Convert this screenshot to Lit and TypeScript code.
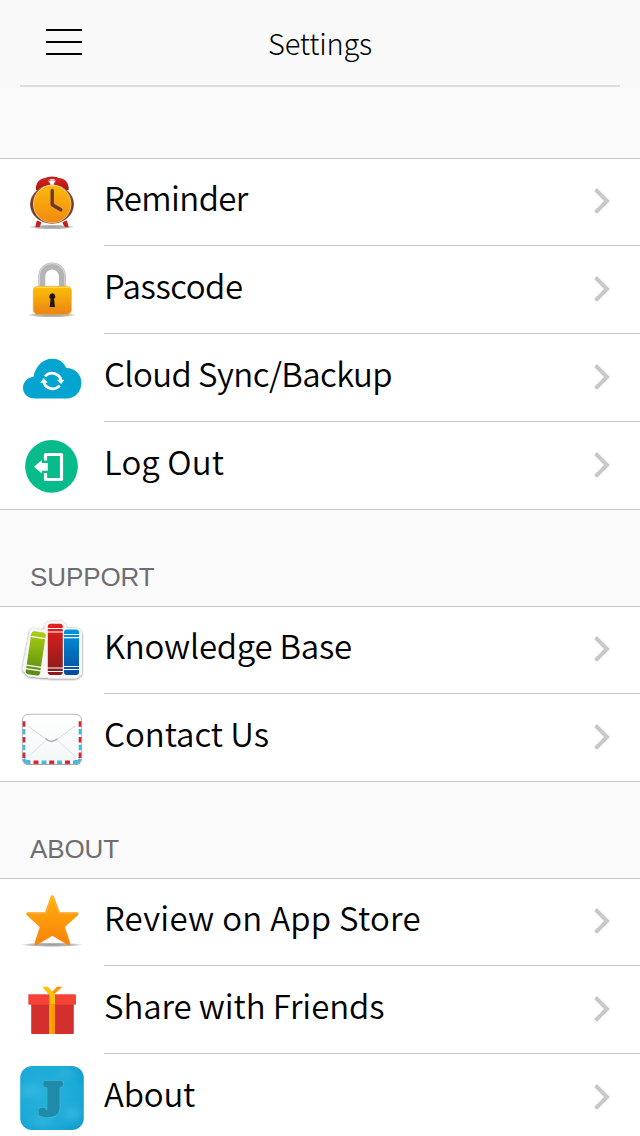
import { LitElement, html, css, svg, type TemplateResult } from "lit";
import { customElement, property } from "lit/decorators.js";
import { styleMap } from "lit/directives/style-map.js";

// Every icon is drawn in a 104x88 cell whose origin is the row's top left corner.
const icons: Record<string, TemplateResult> = {
  clock: svg`
    <defs>
      <linearGradient id="face" x1="0" y1="0" x2="0" y2="1"><stop offset="0" stop-color="#fcb80a"/><stop offset="1" stop-color="#f08a12"/></linearGradient>
      <linearGradient id="bell" x1="0" y1="0" x2="0" y2="1"><stop offset="0" stop-color="#d8241f"/><stop offset="1" stop-color="#a81414"/></linearGradient>
      <linearGradient id="rim" x1="0" y1="0" x2="0" y2="1"><stop offset="0" stop-color="#a0574a"/><stop offset=".5" stop-color="#70382f"/><stop offset="1" stop-color="#7e4437"/></linearGradient>
      <radialGradient id="shade"><stop offset="0" stop-color="#999"/><stop offset=".7" stop-color="#bbb"/><stop offset="1" stop-color="#fff"/></radialGradient>
    </defs>
    <ellipse cx="51.800" cy="69" rx="23.500" ry="2.400" fill="url(#shade)"/>
    <path d="M37.200 63l3.600 1.500-1.500 4.200h-3.400zM66.500 63l-3.600 1.500 2.200 4.200h3z" fill="#c91b1b" stroke="#c91b1b" stroke-width="1"/>
    <path d="M44 22q8-4.500 16 0" fill="none" stroke="#c42020" stroke-width="2.600"/>
    <path d="M36 32c-.8-6.500 3.500-12 10-12 2.600 0 4 1 4.500 3v4c-6 .5-9.500 2.500-12.500 5zM68.600 32c.8-6.500-3.500-12-10-12-2.600 0-4 1-4.500 3v4c6 .5 9 2.500 12 5z" fill="url(#bell)"/>
    <path d="M48 22.700h8l-2.200 3v3.700h-3.600v-3.700z" fill="#fff" stroke="#d55" stroke-width=".5"/>
    <ellipse cx="52" cy="46.200" rx="21.900" ry="19.500" fill="url(#rim)"/>
    <circle cx="52.200" cy="46" r="19.200" fill="#fbdc96"/>
    <circle cx="52.200" cy="46.200" r="18.500" fill="url(#face)"/>
    <path d="M52.200 32.500v14.200l8.600 5.100" fill="none" stroke="#70382c" stroke-width="3.400" stroke-linecap="round" stroke-linejoin="round"/>`,
  lock: svg`
    <defs>
      <linearGradient id="lockbody" x1="0" y1="0" x2="0" y2="1"><stop offset="0" stop-color="#fbbf06"/><stop offset="1" stop-color="#ec8314"/></linearGradient>
      <radialGradient id="lshade"><stop offset="0" stop-color="#999"/><stop offset=".7" stop-color="#bbb"/><stop offset="1" stop-color="#fff"/></radialGradient>
    </defs>
    <ellipse cx="51.800" cy="69" rx="24.500" ry="2.400" fill="url(#lshade)"/>
    <path d="M41.800 44v-13.500a10.300 10.600 0 0 1 20.600 0v13.500" fill="none" stroke="#b4b4b4" stroke-width="7"/>
    <path d="M39.400 42v-12a12.700 12.400 0 0 1 25.400 0v12" fill="none" stroke="#d4d4d4" stroke-width="1.200"/>
    <rect x="33.300" y="40.300" width="38" height="28" rx="4.500" fill="url(#lockbody)" stroke="#f3a52a" stroke-width=".7"/>
    <path d="M36 41.300h33" stroke="#ffdf6a" stroke-width="1"/>
    <path d="M52.200 47.300a3.200 3.200 0 0 1 1.800 5.800l1 8h-5.400l1-8a3.200 3.200 0 0 1 1.600-5.800z" fill="#20170d"/>`,
  cloud: svg`
    <path d="M35 64.600c-7 0-12-4.700-12-10.800 0-5.600 4.300-10.200 10.600-11 1.600-10 8.900-18 18.500-18 6.800 0 11.400 3.200 14.200 9.200 9 0 15.100 6.500 15.100 14.600 0 9.500-6.500 16-14.800 16z" fill="#04a4d0"/>
    <g fill="none" stroke="#fff" stroke-width="2.700">
      <path d="M45 42.500a9 8.500 0 0 1 16 4.500"/>
      <path d="M59.700 51.500a9 8.500 0 0 1-16-4.500"/>
    </g>
    <path d="M57.500 46h6.300l-2.700 3.800zM40.800 48.400h6.400l-3.400-3.900z" fill="#fff" stroke="#fff" stroke-width=".6"/>`,
  logout: svg`
    <circle cx="51.500" cy="44.300" r="26.400" fill="#08bb8b"/>
    <path d="M45.500 38.500v-6h16v25h-16v-6.500" fill="none" stroke="#fff" stroke-width="3.200" stroke-linejoin="round"/>
    <path d="M34 44.800l7.800-6.600v2.900h6v7.600h-6v2.900z" fill="#fff"/>`,
  books: svg`
    <defs>
      <linearGradient id="green" x1="0" y1="0" x2="0" y2="1"><stop offset="0" stop-color="#a9cf12"/><stop offset="1" stop-color="#598a12"/></linearGradient>
      <linearGradient id="red" x1="0" y1="0" x2="0" y2="1"><stop offset="0" stop-color="#e51f1d"/><stop offset="1" stop-color="#851b1c"/></linearGradient>
      <linearGradient id="blue" x1="0" y1="0" x2="0" y2="1"><stop offset="0" stop-color="#0096e0"/><stop offset="1" stop-color="#06489c"/></linearGradient>
      <filter id="soft" x="-20%" y="-20%" width="140%" height="140%"><feDropShadow dx="0" dy=".6" stdDeviation=".9" flood-color="#000" flood-opacity=".6"/></filter>
    </defs>
    <g filter="url(#soft)" fill="#f6f6f6" stroke="#f6f6f6" stroke-width="7" stroke-linejoin="round">
      <path d="M33 26l9.500 1.500 5.500-2.500v-4.500l3-2h9l3 2v5h12.500l3 2v39l-3 2.500H50l-3-1-3 .5-14-1.500-4-4z"/>
    </g>
    <g transform="rotate(8.500 35 47)">
      <rect x="28.500" y="25.500" width="14.500" height="43.500" rx="3" fill="url(#green)"/>
      <path d="M28 31.200h15.500M28 60.200h15.500M28 63.800h15.500" stroke="#fff" stroke-width="1.300"/>
    </g>
    <rect x="47.800" y="17.700" width="15" height="51.300" rx="3" fill="url(#red)"/>
    <path d="M47.500 22.500h15.600M47.500 26h15.600M47.500 62h15.600M47.500 65.500h15.600" stroke="#fff" stroke-width="1.200"/>
    <rect x="64" y="23.500" width="15" height="45.500" rx="3" fill="url(#blue)"/>
    <path d="M63.700 28.500h15.600M63.700 31.700h15.600M63.700 60.500h15.600M63.700 63.500h15.600" stroke="#fff" stroke-width="1.200"/>`,
  mail: svg`
    <defs>
      <linearGradient id="paper" x1="0" y1="0" x2="0" y2="1"><stop offset="0" stop-color="#fff"/><stop offset="1" stop-color="#f4f7f9"/></linearGradient>
      <clipPath id="env"><rect x="22.300" y="20.300" width="59.400" height="50" rx="6"/></clipPath>
    </defs>
    <rect x="22.300" y="21" width="59.400" height="50" rx="6" fill="#888"/>
    <g clip-path="url(#env)">
      <rect x="22" y="20" width="60" height="51" fill="#fff"/>
      <g stroke-width="7" stroke="#dc2230">
        <path d="M22 27.200v5.500M22 43v5.500M22 58.500v5.500M82 27.200v5.500M82 43v5.500M82 58.500v5.500"/>
        <path d="M33.500 69.500h5M49.200 69.500h5M65 69.500h5"/>
      </g>
      <g stroke-width="7" stroke="#45b9df">
        <path d="M22 35v5.500M22 50.800v5.500M82 35v5.500M82 50.800v5.500M22 66.400l5 5M82 66.400l-5 5"/>
        <path d="M26.500 69.500h4M41.500 69.500h5M57 69.500h5M73 69.500h4.500"/>
      </g>
      <path d="M25.700 20h52.600v42.500l-4.500 4H30.200l-4.500-4z" fill="url(#paper)"/>
      <path d="M28.500 62.500l18.500-17M75.500 62.500L56.500 45.500" stroke="#dce2e5" stroke-width="1" fill="none"/>
      <path d="M28 32l18 13M75 32L57.500 45" stroke="#d2d6d9" stroke-width="1" fill="none"/>
      <path d="M45.500 44.500q6 6 12 0" stroke="#a9b0b5" stroke-width="1.300" fill="none"/>
    </g>
    <rect x="22.300" y="20.300" width="59.400" height="50" rx="6" fill="none" stroke="#aaa" stroke-width=".8"/>`,
  star: svg`
    <defs>
      <linearGradient id="gold" x1="0" y1="0" x2="0" y2="1"><stop offset="0" stop-color="#ffae0c"/><stop offset="1" stop-color="#fa8309"/></linearGradient>
      <radialGradient id="sshade"><stop offset="0" stop-color="#999"/><stop offset=".7" stop-color="#bbb"/><stop offset="1" stop-color="#fff"/></radialGradient>
    </defs>
    <ellipse cx="52" cy="66.700" rx="31" ry="2.200" fill="url(#sshade)"/>
    <path d="M52.300 19l6.300 17H76.800l-14 12.400 5.600 16.900-16.100-9.600-15.900 9.600 5.400-16.900L28 36h18.300z" fill="url(#gold)" stroke="url(#gold)" stroke-width="3.500" stroke-linejoin="round"/>
    <path d="M28.500 35.200h17.500l6.300-17 6.300 17h17.500" fill="none" stroke="#ffc766" stroke-width=".8" opacity=".6"/>`,
  gift: svg`
    <path d="M42.300 20.700h5.700l6.400 7.200h-6.200z" fill="#ffc107"/>
    <path d="M62.500 20.700h-5.700l-5.300 5.800 2.400 2z" fill="#ff9500"/>
    <rect x="31.200" y="38" width="42.600" height="30" rx="1" fill="#d32f2f"/>
    <rect x="28.300" y="28.300" width="47.700" height="10.500" rx="1" fill="#f44336"/>
    <path d="M49.300 28h5.700v10.700h-5.700z" fill="#ffc107"/>
    <path d="M49.300 38.700h5.700V68h-5.700z" fill="#ff9800"/>
    <path d="M49.300 38.700h2.300V68h-2.300z" fill="#ffb300"/>
    <path d="M49.300 29l3-3 2.700 3z" fill="#ffc107"/>`,
  app: svg`
    <defs>
      <radialGradient id="sea" cx=".4" cy=".45" r=".75"><stop offset="0" stop-color="#28b2dc"/><stop offset=".7" stop-color="#1ba9d7"/><stop offset="1" stop-color="#0f9bcc"/></radialGradient>
      <clipPath id="tile"><rect x="20.200" y="12" width="63.600" height="64" rx="12"/></clipPath>
      <filter id="mist" x="-50%" y="-50%" width="200%" height="200%"><feGaussianBlur stdDeviation="4"/></filter>
    </defs>
    <rect x="20.200" y="12" width="63.600" height="64" rx="12" fill="url(#sea)"/>
    <g clip-path="url(#tile)"><g filter="url(#mist)" fill="#4cc3e5" opacity=".5">
      <ellipse cx="30" cy="37" rx="11" ry="5"/><ellipse cx="73" cy="60" rx="9" ry="7"/><ellipse cx="42" cy="67" rx="12" ry="4"/><ellipse cx="66" cy="19" rx="11" ry="3"/>
    </g></g>
    <text class="jay" transform="translate(44 53.500) scale(1.120 1)" fill="#4cb9d8" stroke="#4cb9d8" stroke-width="5.500">J</text>
    <text class="jay" transform="translate(44 53.500) scale(1.120 1)" fill="#208aaa" stroke="#208aaa" stroke-width="4.500">J</text>`,
};

@customElement("settings-row")
class SettingsRow extends LitElement {
  @property() icon = "";
  @property() label = "";
  @property({ type: Number }) tracking = 0;

  static styles = css`
    :host { display: flex; height: 88px; }
    :host(:first-child) { height: 87px; }
    .icon { flex: none; width: 104px; height: 88px; display: block; margin-top: 1px; }
    :host(:first-child) .icon { margin-top: 0; }
    .content {
      flex: 1;
      display: flex;
      align-items: flex-start;
      justify-content: space-between;
      box-sizing: border-box;
      border-top: 1px solid #c8c7cc;
      padding: 17px 30px 0 0;
    }
    :host(:first-child) .content { padding-top: 16px; }
    .label {
      font: 350 33px/44px "Noto Sans CJK JP DemiLight", "Noto Sans CJK JP", "Noto Sans", sans-serif;
      white-space: nowrap;
      color: #000;
    }
    .chevron { width: 16px; height: 26px; flex: none; margin-top: 13px; }
    .jay { font: 700 34px "DejaVu Serif", serif; stroke-linejoin: round; }
  `;

  render() {
    return html`
      <svg class="icon" viewBox="0 0 104 88">${icons[this.icon]}</svg>
      <div class="content">
        <span class="label" style=${styleMap({ letterSpacing: `${this.tracking}px` })}>${this.label}</span>
        <svg class="chevron" viewBox="0 0 16 26">
          <path d="M1.500 1.500L13 13 1.500 24.500" fill="none" stroke="#c7c7cc" stroke-width="4"/>
        </svg>
      </div>`;
  }
}

type Row = [icon: string, label: string, tracking: number];

const groups: { title: string; rows: Row[] }[] = [
  {
    title: "",
    rows: [
      ["clock", "Reminder", -0.6],
      ["lock", "Passcode", -0.45],
      ["cloud", "Cloud Sync/Backup", -0.57],
      ["logout", "Log Out", 0.1],
    ],
  },
  { title: "SUPPORT", rows: [["books", "Knowledge Base", -0.24], ["mail", "Contact Us", -0.03]] },
  {
    title: "ABOUT",
    rows: [
      ["star", "Review on App Store", 0.27],
      ["gift", "Share with Friends", -0.1],
      ["app", "About", -0.2],
    ],
  },
];

@customElement("app-root")
class AppRoot extends LitElement {
  static styles = css`
    :host {
      display: block;
      height: 1136px;
      overflow: hidden;
      background: #fafafa;
    }
    .header {
      height: 88px;
      box-sizing: border-box;
      background: #f9f9f9;
      padding: 0 20px 1px;
    }
    .bar {
      height: 87px;
      box-sizing: border-box;
      border-bottom: 2px solid #dcdcdc;
      display: grid;
      grid-template-columns: 62px 1fr 62px;
      align-items: center;
      padding-bottom: 1px;
    }
    .menu { width: 36px; height: 26px; margin-left: 26px; }
    .title {
      text-align: center;
      font: 300 29px/40px "Noto Sans CJK JP", "Noto Sans", sans-serif;
      letter-spacing: -0.2px;
      padding-bottom: 1px;
      color: #000;
    }
    .spacer { height: 70px; }
    .section-title {
      box-sizing: border-box;
      height: 96px;
      padding: 51px 30px 0;
      font: 26px/32px "Liberation Sans", Arial, sans-serif;
      letter-spacing: -0.1px;
      color: #6d6d72;
    }
    .group {
      display: flow-root;
      background: #fff;
      border-bottom: 1px solid #c8c7cc;
      box-shadow: inset 0 1px #c8c7cc;
    }
  `;

  render() {
    return html`
      <header class="header">
        <div class="bar">
          <svg class="menu" viewBox="0 0 36 26"><path d="M0 1h36M0 13h36M0 25h36" stroke="#000" stroke-width="2"/></svg>
          <div class="title">Settings</div>
        </div>
      </header>
      <div class="spacer"></div>
      ${groups.map((g) => html`
        ${g.title ? html`<div class="section-title">${g.title}</div>` : ""}
        <section class="group">
          ${g.rows.map(([icon, label, tracking]) => html`
            <settings-row .icon=${icon} .label=${label} .tracking=${tracking}></settings-row>`)}
        </section>`)}`;
  }
}
